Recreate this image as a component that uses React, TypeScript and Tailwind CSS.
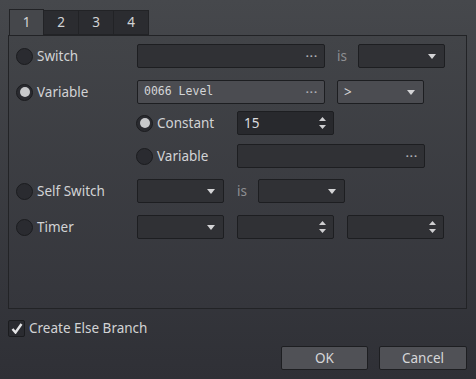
import React from 'react';

const font = { fontFamily: '"Noto Sans", "Open Sans", sans-serif' };

function Radio({ on }: { on?: boolean }) {
  return (
    <span className="flex h-[17px] w-[17px] shrink-0 items-center justify-center rounded-full border border-[#1b1c1f] bg-[#2a2b30]">
      {on && <span className="h-[10px] w-[10px] rounded-full bg-[#c9cacc]" />}
    </span>
  );
}

function Dots() {
  return <span className="ml-auto mr-[6px] text-[11px] font-bold tracking-[1px] text-[#b0b1b5]">···</span>;
}

function Arrow() {
  return (
    <svg className="ml-auto mr-[8px]" width="8" height="5" viewBox="0 0 8 5">
      <path d="M0 0h8L4 5z" fill="#d4d4d6" />
    </svg>
  );
}

function Spin() {
  return (
    <span className="ml-auto mr-[7px] flex flex-col gap-[4px]">
      <svg width="7" height="4" viewBox="0 0 7 4"><path d="M0 4h7L3.5 0z" fill="#cfcfd1" /></svg>
      <svg width="7" height="4" viewBox="0 0 7 4"><path d="M0 0h7L3.5 4z" fill="#cfcfd1" /></svg>
    </span>
  );
}

function Box({ w, light, children, dark }: { w: string; light?: boolean; dark?: boolean; children?: React.ReactNode }) {
  const bg = light ? 'bg-[#4b4c51]' : dark ? 'bg-[#28292d]' : 'bg-[#303135]';
  return (
    <div className={`flex h-[24px] shrink-0 items-center rounded-[2px] border border-[#1d1e21] ${bg} ${w}`}>
      {children}
    </div>
  );
}

function Label({ on, text, w }: { on?: boolean; text: string; w: string }) {
  return (
    <div className={`flex shrink-0 items-center gap-[4px] ${w}`}>
      <Radio on={on} />
      <span className="text-[13.5px] text-[#d2d3d5]">{text}</span>
    </div>
  );
}

export default function App() {
  return (
    <div className="flex h-[379px] w-[476px] flex-col bg-gradient-to-b from-[#46484c] to-[#2f3036] text-[#d2d3d5]" style={font}>
      <div className="flex pl-[9px] pt-[9px]">
        <div className="z-10 -mb-px flex h-[26px] w-[35px] items-center justify-center border border-b-0 border-[#222326] bg-[#45474b] text-[13.5px]">1</div>
        {['2', '3', '4'].map((t) => (
          <div key={t} className="mt-[1px] flex h-[25px] w-[35px] items-center justify-center border border-l-0 border-[#222326] bg-[#2b2c30] text-[13.5px]">
            {t}
          </div>
        ))}
      </div>
      <div className="ml-[8px] flex h-[274px] w-[459px] flex-col border border-[#222326] bg-gradient-to-b from-[#424448] to-[#35363c] pl-[7px]">
        <div className="mt-[8px] flex items-center">
          <Label text="Switch" w="w-[121px]" />
          <Box w="w-[188px]"><Dots /></Box>
          <span className="ml-[12px] w-[21px] text-[13.5px] text-[#8e8f93]">is</span>
          <Box w="w-[87px]"><Arrow /></Box>
        </div>
        <div className="mt-[12px] flex items-center">
          <Label on text="Variable" w="w-[121px]" />
          <Box w="w-[188px]" light>
            <span className="pl-[6px] text-[11.5px] text-[#d4d5d7]" style={{ fontFamily: '"DejaVu Sans Mono", monospace' }}>0066 Level</span>
            <Dots />
          </Box>
          <div className="ml-[12px]">
            <Box w="w-[87px]" light>
              <span className="pl-[6px] text-[13.5px] text-[#d4d5d7]">&gt;</span>
              <Arrow />
            </Box>
          </div>
        </div>
        <div className="mt-[7px] flex items-center pl-[120px]">
          <Label on text="Constant" w="w-[101px]" />
          <Box w="w-[97px]" dark>
            <span className="pl-[6px] text-[13.5px] text-[#dcdcde]">15</span>
            <Spin />
          </Box>
        </div>
        <div className="mt-[9px] flex items-center pl-[120px]">
          <Label text="Variable" w="w-[101px]" />
          <Box w="w-[188px]"><Dots /></Box>
        </div>
        <div className="mt-[11px] flex items-center">
          <Label text="Self Switch" w="w-[121px]" />
          <Box w="w-[87px]"><Arrow /></Box>
          <span className="ml-[13px] w-[21px] text-[13.5px] text-[#8e8f93]">is</span>
          <Box w="w-[87px]"><Arrow /></Box>
        </div>
        <div className="mt-[12px] flex items-center">
          <Label text="Timer" w="w-[121px]" />
          <Box w="w-[87px]"><Arrow /></Box>
          <div className="ml-[13px]"><Box w="w-[97px]"><Spin /></Box></div>
          <div className="ml-[13px]"><Box w="w-[97px]"><Spin /></Box></div>
        </div>
      </div>
      <div className="ml-[8px] mt-[9px] flex items-center gap-[4px]">
        <span className="flex h-[17px] w-[17px] items-center justify-center rounded-[2px] border border-[#1b1c1f] bg-[#2a2b30]">
          <svg width="12" height="11" viewBox="0 0 12 11">
            <path d="M1.5 6l3 3.5L10.5 1" stroke="#e4e4e6" strokeWidth="2.4" fill="none" />
          </svg>
        </span>
        <span className="text-[13.5px]">Create Else Branch</span>
      </div>
      <div className="mt-[8px] flex justify-end gap-[11px] pr-[9px]">
        <button className="h-[24px] w-[87px] rounded-[2px] border border-[#1d1e21] bg-[#505156] text-[13.5px] text-[#d6d7d9]">OK</button>
        <button className="h-[24px] w-[88px] rounded-[2px] border border-[#1d1e21] bg-[#505156] text-[13.5px] text-[#d6d7d9]">Cancel</button>
      </div>
    </div>
  );
}
